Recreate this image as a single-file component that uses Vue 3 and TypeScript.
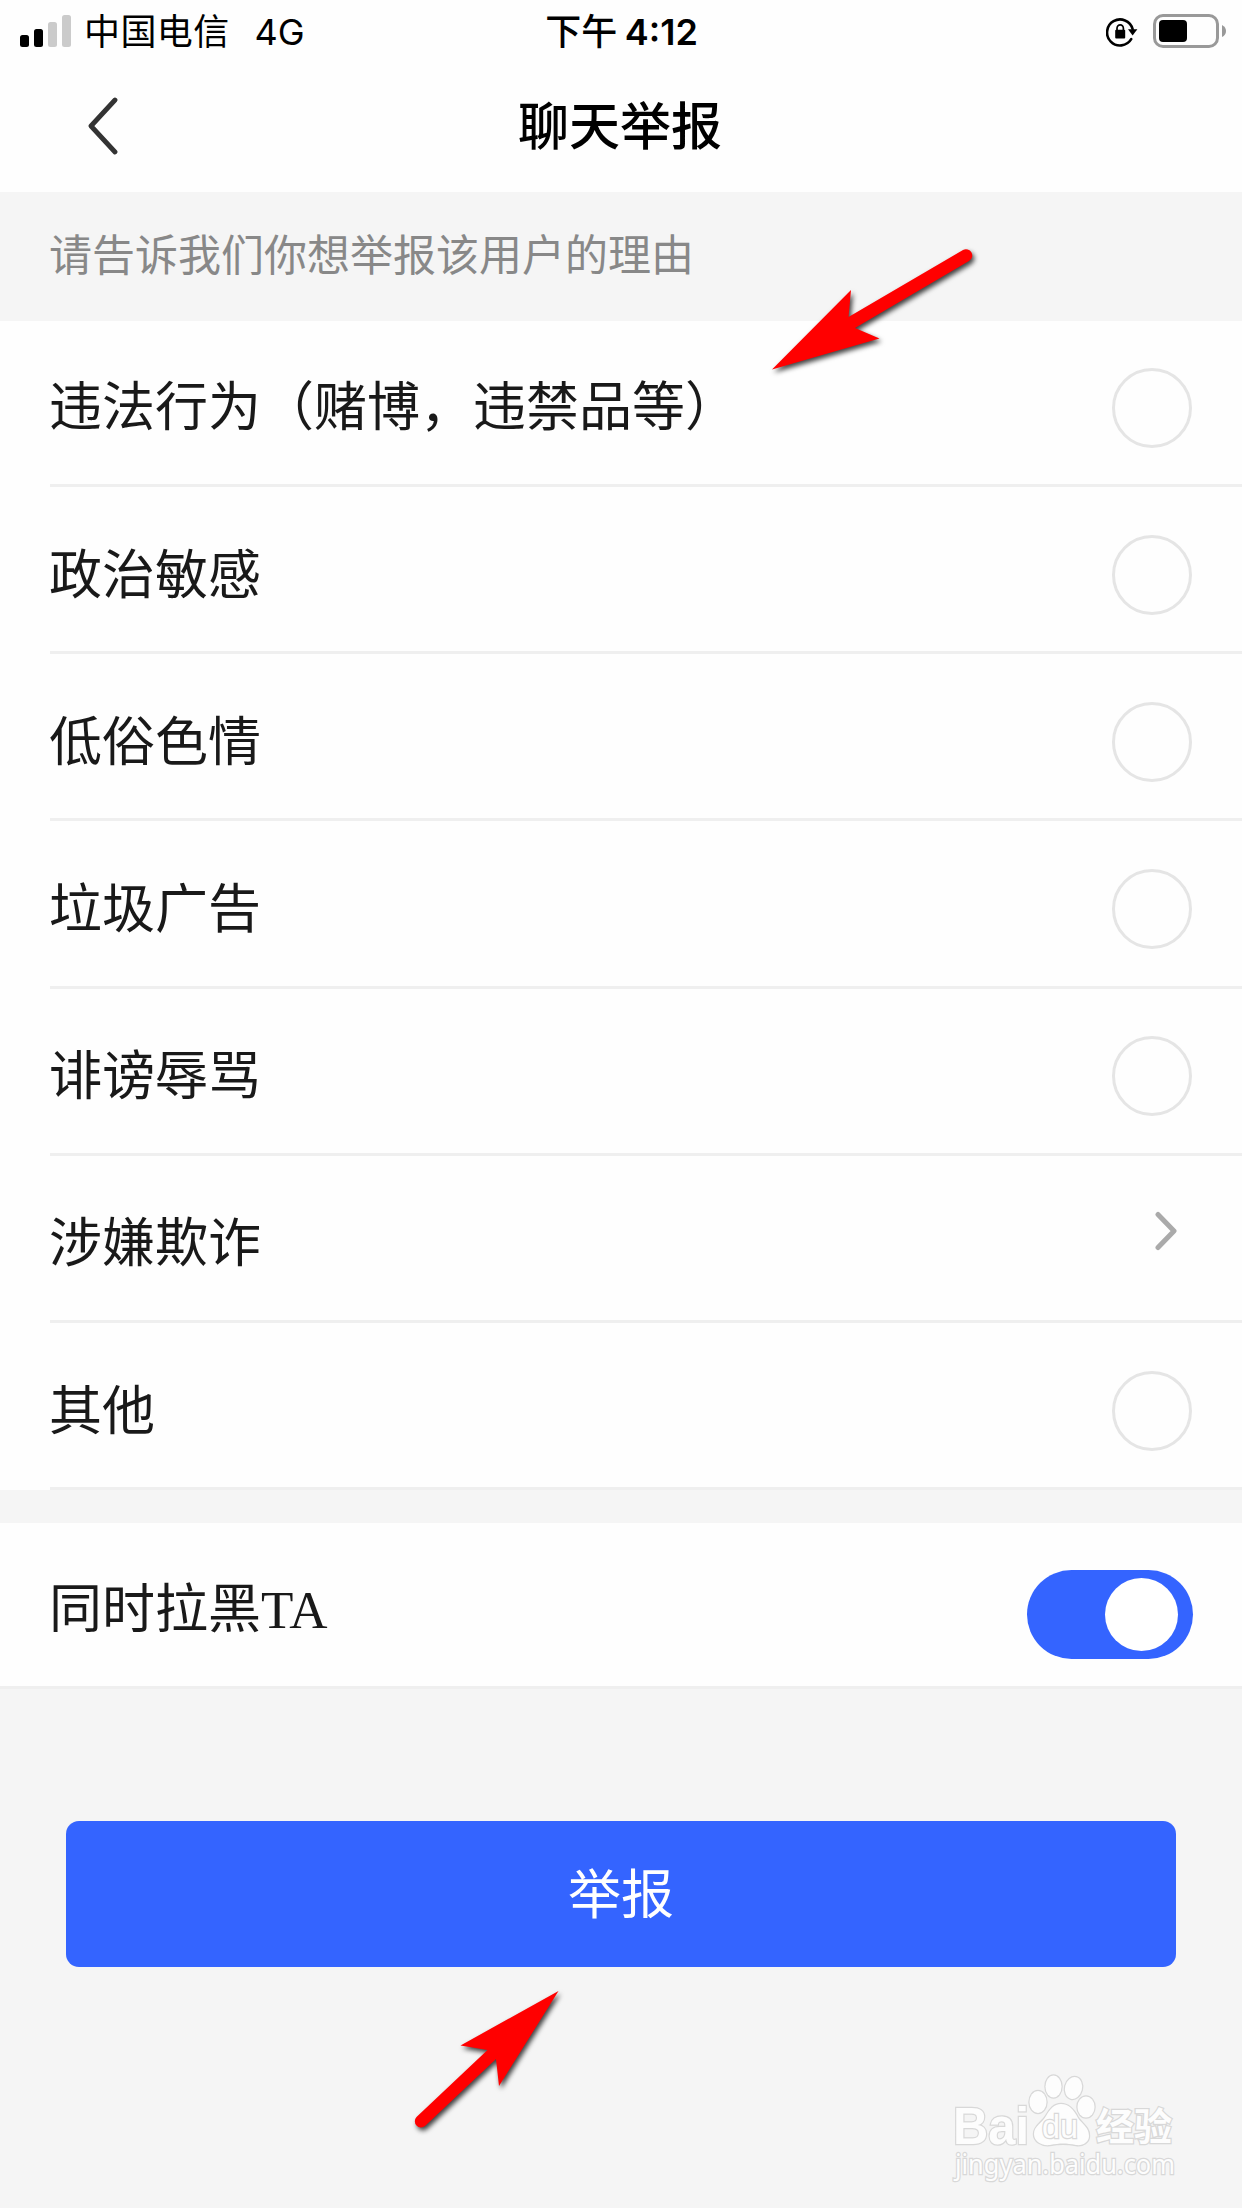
<script setup lang="ts">
import { ref } from 'vue'

interface Reason {
  label: string
  kind: 'radio' | 'link'
}

const reasons: Reason[] = [
  { label: '违法行为（赌博，违禁品等）', kind: 'radio' },
  { label: '政治敏感', kind: 'radio' },
  { label: '低俗色情', kind: 'radio' },
  { label: '垃圾广告', kind: 'radio' },
  { label: '诽谤辱骂', kind: 'radio' },
  { label: '涉嫌欺诈', kind: 'link' },
  { label: '其他', kind: 'radio' },
]

const blockUser = ref(true)
</script>

<template>
  <div class="page">
    <header class="top">
      <div class="status">
        <div class="status-left">
          <svg class="signal" width="52" height="32" viewBox="0 0 52 32">
            <rect x="0" y="20" width="9" height="12" rx="2.5" />
            <rect x="14" y="14" width="9" height="18" rx="2.5" />
            <rect x="28" y="7" width="9" height="25" rx="2.5" fill="#cbcbcb" />
            <rect x="42" y="0" width="9" height="32" rx="2.5" fill="#cbcbcb" />
          </svg>
          <span class="carrier">中国电信</span>
          <span class="network">4G</span>
        </div>
        <div class="time">下午 <b>4:12</b></div>
        <div class="status-right">
          <svg width="32" height="30" viewBox="0 0 32 30">
            <path d="M25.2 22.2 A13 13 0 1 1 26.6 12" fill="none" stroke="#000" stroke-width="2.6" stroke-linecap="round" />
            <path d="M22 12.2 h9.4 l-4.8 6.4 z" />
            <rect x="9.2" y="12.8" width="10" height="8.6" rx="1" />
            <path d="M11 14 v-2.6 a3.2 3.6 0 0 1 6.4 0 V14" fill="none" stroke="#000" stroke-width="1.7" />
          </svg>
          <svg class="battery" width="74" height="34" viewBox="0 0 74 34">
            <rect x="1.5" y="1.5" width="63" height="31" rx="8.5" fill="none" stroke="#999" stroke-width="3" />
            <rect x="6" y="6" width="28" height="22" rx="4" />
            <path d="M69 11 q4 2 4 6 t-4 6 z" fill="#999" />
          </svg>
        </div>
      </div>
      <nav class="nav">
        <svg class="back" width="31" height="58" viewBox="0 0 31 58">
          <path d="M28 3 L4 29 L28 55" fill="none" stroke="#333" stroke-width="4.8" stroke-linecap="round" stroke-linejoin="round" />
        </svg>
        <h1>聊天举报</h1>
      </nav>
    </header>

    <p class="hint">请告诉我们你想举报该用户的理由</p>

    <ul class="list">
      <li v-for="r in reasons" :key="r.label" class="item">
        <div class="row">
          <span class="label">{{ r.label }}</span>
          <i v-if="r.kind === 'radio'" class="radio"></i>
          <svg v-else class="chevron" width="24" height="40" viewBox="0 0 24 40">
            <path d="M4 3.5 L20 20 L4 36.5" fill="none" stroke="#aaa" stroke-width="5" stroke-linecap="round" stroke-linejoin="round" />
          </svg>
        </div>
      </li>
    </ul>

    <section class="block">
      <span class="block-label">同时拉黑TA</span>
      <button class="toggle" :class="{ on: blockUser }" @click="blockUser = !blockUser"><i></i></button>
    </section>

    <button class="submit">举报</button>

    <svg class="overlay arrow-a" width="220" height="150" viewBox="760 235 220 150">
      <path d="M772 369.5 L851 290 L848.5 317 L963 250 A6.2 6.2 0 0 1 969 261 L855 328 L879.5 338.5 Z" fill="#f00" />
    </svg>
    <svg class="overlay arrow-b" width="170" height="160" viewBox="405 1980 170 160">
      <path d="M558.5 1991 L460.5 2045.5 L487.5 2050 L416.5 2117 A6.2 6.2 0 0 0 425 2126 L496 2059 L499 2086 Z" fill="#f00" />
    </svg>

    <svg class="overlay mark" width="250" height="130" viewBox="940 2065 250 130">
      <g class="ink">
        <text x="953" y="2143.5" class="latin" textLength="76" lengthAdjust="spacingAndGlyphs">Bai</text>
        <ellipse cx="1038" cy="2102" rx="8.5" ry="11" />
        <ellipse cx="1053.5" cy="2086.5" rx="8" ry="11" />
        <ellipse cx="1073.5" cy="2088" rx="8.5" ry="11" transform="rotate(14 1073.5 2088)" />
        <ellipse cx="1086" cy="2107" rx="8.5" ry="10.5" />
        <path d="M1061 2104 C1069 2104 1074 2110 1078 2118 C1082 2124 1089 2127 1089 2136 C1089 2142 1083 2146 1076 2145 C1066 2143 1060 2143 1050 2145 C1041 2146 1034 2141 1034 2134 C1034 2126 1042 2123 1046 2116 C1050 2109 1054 2104 1061 2104 Z" />
        <text x="1042" y="2138" class="du" textLength="36" lengthAdjust="spacingAndGlyphs">du</text>
        <text x="1096" y="2140" class="cjk" textLength="76" lengthAdjust="spacingAndGlyphs">经验</text>
        <text x="955" y="2174" class="url" textLength="220" lengthAdjust="spacingAndGlyphs">jingyan.baidu.com</text>
      </g>
    </svg>
  </div>
</template>

<style>
body {
  background: #f5f5f5;
}
</style>

<style scoped>
.page {
  position: relative;
  width: 1242px;
  height: 2208px;
  overflow: hidden;
  background: #f5f5f5;
  color: #191919;
  font-family: "Noto Sans CJK SC", sans-serif;
}
.top {
  height: 192px;
  background: #fefefe;
  color: #000;
}
.status {
  display: grid;
  grid-template-columns: 1fr auto 1fr;
  height: 62px;
  padding: 0 15px 0 20px;
  font: 36px/62px Inter, "Noto Sans CJK SC", sans-serif;
}
.status-left,
.status-right {
  display: flex;
  align-items: center;
}
.signal {
  margin-right: 12px;
  margin-top: -2px;
}
.carrier {
  margin-top: 1px;
  letter-spacing: 0.4px;
}
.network {
  margin-top: 1px;
  margin-left: 25px;
}
.time {
  margin-right: 4px;
  padding-top: 1px;
  height: 61px;
  font-weight: 500;
  white-space: pre;
  word-spacing: -2px;
}
.time b {
  font-weight: 600;
}
.status-right {
  justify-content: flex-end;
  gap: 15px;
}
.battery {
  margin-top: -2px;
}
.nav {
  position: relative;
  display: flex;
  justify-content: center;
  height: 130px;
}
.back {
  position: absolute;
  left: 87px;
  top: 35px;
}
h1 {
  margin: 0 2px 0 0;
  font-size: 51px;
  line-height: 122px;
  font-weight: 500;
}
.hint {
  height: 129px;
  margin: 0;
  padding-left: 49px;
  font-size: 43px;
  line-height: 121px;
  color: #888;
}
.list {
  margin: 0;
  padding: 0;
  list-style: none;
  background: #fefefe;
}
.item {
  height: 167.2px;
  padding-left: 50px;
}
.item:first-child {
  height: 166px;
}
.row {
  display: flex;
  align-items: center;
  justify-content: space-between;
  box-sizing: border-box;
  height: 100%;
  padding-right: 50px;
  border-bottom: 3px solid #efefef;
  font-size: 53px;
  line-height: 80px;
}
.label {
  margin-left: -1px;
  margin-top: 3px;
}
.item:first-child .label {
  margin-top: 0;
}
.radio {
  box-sizing: border-box;
  width: 80px;
  height: 80px;
  margin-top: 11px;
  border: 3px solid #e5e5e5;
  border-radius: 50%;
}
.chevron {
  margin: 0 14px 14px 0;
}
.block {
  display: flex;
  align-items: center;
  justify-content: space-between;
  box-sizing: border-box;
  height: 166px;
  margin-top: 33px;
  padding: 0 49px;
  background: #fefefe;
  border-bottom: 3px solid #efefef;
}
.block-label {
  margin-top: 10px;
  font: 53px/80px "Liberation Serif", "Noto Sans CJK SC", serif;
}
.toggle {
  display: flex;
  align-items: center;
  box-sizing: border-box;
  width: 166px;
  height: 89px;
  margin-top: 19px;
  padding: 0 15px;
  border: 0;
  border-radius: 45px;
  background: #ddd;
}
.toggle.on {
  justify-content: flex-end;
  background: #3464ff;
}
.toggle i {
  width: 73px;
  height: 73px;
  border-radius: 50%;
  background: #fff;
}
.submit {
  display: block;
  width: 1110px;
  height: 145.5px;
  margin: 132px auto 0;
  padding: 0 0 5px;
  border: 0;
  border-radius: 13px;
  background: #3464ff;
  color: #fff;
  font: 53px/140px "Noto Sans CJK SC", sans-serif;
}
.overlay {
  position: absolute;
}
.arrow-a {
  left: 760px;
  top: 235px;
  filter: drop-shadow(2px 3px 2.5px rgba(0, 0, 0, 0.75));
}
.arrow-b {
  left: 405px;
  top: 1980px;
  filter: drop-shadow(2px 3px 2.5px rgba(0, 0, 0, 0.75));
}
.mark {
  left: 940px;
  top: 2065px;
}
.ink {
  fill: #fdfdfd;
  stroke: #d8d8d8;
  stroke-width: 2.5px;
  paint-order: stroke;
}
.latin {
  font: bold 52px "Liberation Sans", sans-serif;
}
.du {
  font: 34px "Liberation Sans", sans-serif;
}
.cjk {
  font: bold 38px "Noto Sans CJK SC", sans-serif;
}
.url {
  font: 27px "Noto Sans", sans-serif;
}
</style>
